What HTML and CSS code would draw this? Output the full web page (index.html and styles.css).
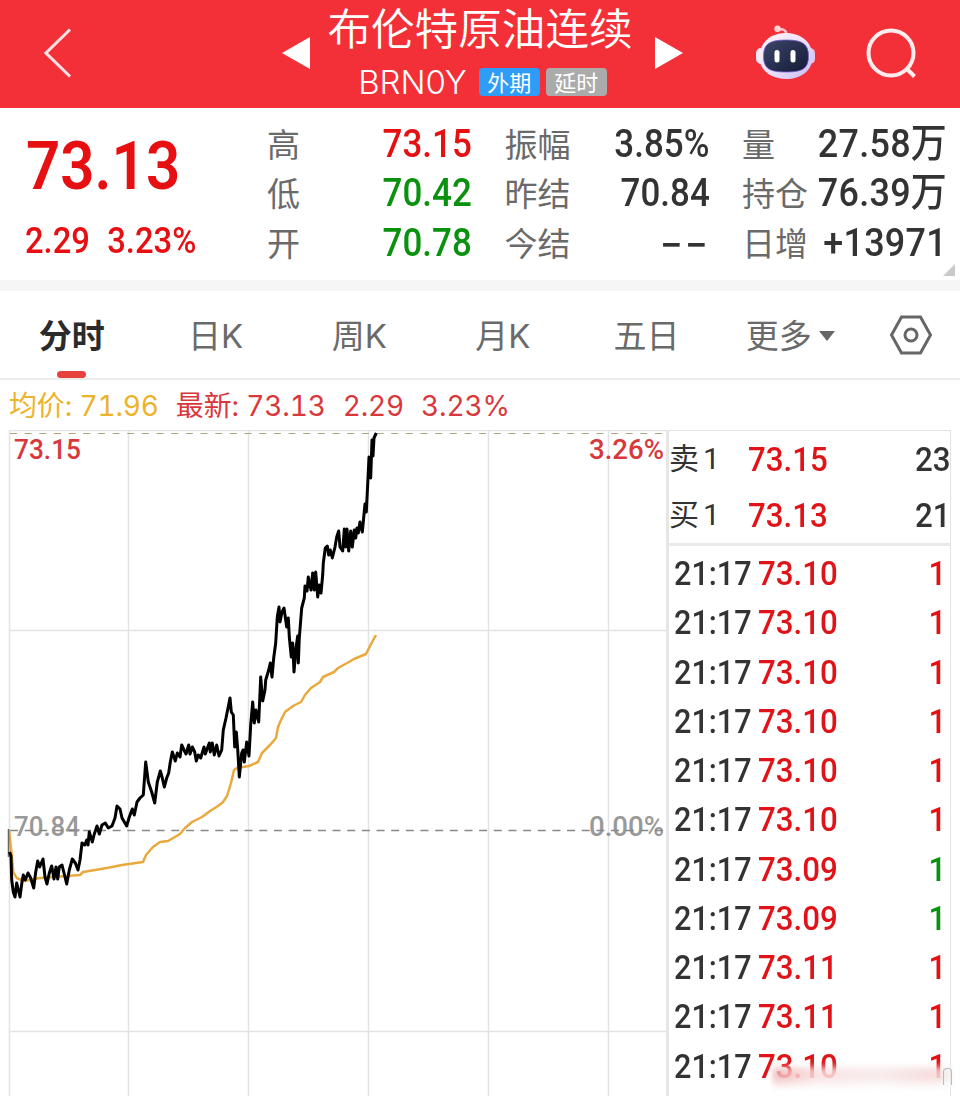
FILE: index.html
```html
<!DOCTYPE html>
<html lang="zh-CN">
<head>
    <meta charset="utf-8" />
    <title>布伦特原油连续</title>
    <link rel="stylesheet" href="styles.css">
</head>
<body>
    <header class="header">
        <svg class="back" width="28" height="50" viewBox="0 0 28 50"><path d="M26 1.500L2 25l24 23.500" /></svg>
        <svg class="prev" width="28" height="32" viewBox="0 0 28 32"><path d="M0 16L28 0v32z" /></svg>
        <div class="title">
            <h1>布伦特原油连续</h1>
            <div class="code">
                <span class="symbol">BRN0Y</span>
                <span class="tag blue">外期</span>
                <span class="tag grey">延时</span>
            </div>
        </div>
        <svg class="next" width="28" height="32" viewBox="0 0 28 32"><path d="M28 16L0 0v32z" /></svg>
        <svg class="robot" width="60" height="56" viewBox="0 0 60 56">
            <defs>
                <linearGradient id="shell" x1="0" y1="0" x2="1" y2="1">
                    <stop offset="0" stop-color="#fff4f7" />
                    <stop offset=".55" stop-color="#ecdff8" />
                    <stop offset="1" stop-color="#c3bcf6" />
                </linearGradient>
                <linearGradient id="face" x1="0" y1="0" x2="1" y2="1">
                    <stop offset="0" stop-color="#3c4668" />
                    <stop offset="1" stop-color="#141b38" />
                </linearGradient>
            </defs>
            <path d="M21 4.500c7-1 10 1 9 6" fill="none" stroke="#ffc4cc" stroke-width="2.500" />
            <circle cx="21.500" cy="3.800" r="3.200" fill="#ffd5da" />
            <rect x="0" y="23" width="10" height="16" rx="5" fill="#f9e6f2" />
            <rect x="49" y="23" width="10" height="16" rx="5" fill="#dcc8f2" />
            <path d="M30 8C45 8 56.500 17 56.500 32c0 14-12 22-26.500 22S3.500 46 3.500 32C3.500 17 15 8 30 8z" fill="url(#shell)" />
            <path d="M30 15c15 0 22.500 3 22.500 16S46 47 30 47 7.500 44 7.500 31 15 15 30 15z" fill="url(#face)" stroke="#7a5fd0" stroke-width=".8" />
            <rect x="18.500" y="25" width="5" height="12.500" rx="2.500" fill="#fff" />
            <rect x="34.500" y="25" width="5" height="12.500" rx="2.500" fill="#fff" />
        </svg>
        <svg class="search" width="52" height="52" viewBox="0 0 52 52"><circle cx="25" cy="25" r="22.500" /><path d="M40.500 40.500l8 8" /></svg>
    </header>

    <section class="quote">
        <div class="last">
            <div class="price">73.13</div>
            <div class="change"><span>2.29</span><span>3.23%</span></div>
        </div>
        <dl class="stats">
            <dt>高</dt><dd class="up">73.15</dd>
            <dt>低</dt><dd class="down">70.42</dd>
            <dt>开</dt><dd class="down">70.78</dd>
        </dl>
        <dl class="stats">
            <dt>振幅</dt><dd>3.85%</dd>
            <dt>昨结</dt><dd>70.84</dd>
            <dt>今结</dt><dd class="empty">--</dd>
        </dl>
        <dl class="stats">
            <dt>量</dt><dd class="wide">27.58万</dd>
            <dt>持仓</dt><dd class="wide">76.39万</dd>
            <dt>日增</dt><dd class="wide">+13971</dd>
        </dl>
        <i class="corner"></i>
    </section>

    <nav class="tabs">
        <a class="active">分时</a>
        <a>日K</a>
        <a>周K</a>
        <a>月K</a>
        <a>五日</a>
        <a>更多<i class="caret"></i></a>
        <svg class="settings" width="44" height="40" viewBox="0 0 44 40"><path d="M12.500 2h19L41.500 20l-10 18h-19L2.500 20z" /><circle cx="22" cy="20" r="6" /></svg>
    </nav>

    <div class="legend">
        <span class="avg">均价: 71.96</span>
        <span>最新: 73.13</span>
        <span>2.29</span>
        <span>3.23%</span>
    </div>

    <main class="main">
        <svg class="chart" width="669" height="666" viewBox="0 430 669 666">
            <g class="grid">
                <path d="M9.500 430V1096M128.500 430V1096M248.500 430V1096M368.500 430V1096M488.500 430V1096M608.500 430V1096" />
                <path d="M9 430.500H669M9 630.500H667M9 1031.500H667" />
                <path class="edge" d="M667.500 430V1096" />
            </g>
            <path class="limit" d="M10 433.500H667" />
            <text class="label grey" x="14" y="835.500" textLength="66" lengthAdjust="spacingAndGlyphs">70.84</text>
            <text class="label grey" x="589" y="835.500" textLength="75" lengthAdjust="spacingAndGlyphs">0.00%</text>
            <path class="zero" d="M10 830.500H667" />
            <polyline class="avg-line" points="9,830 11.700,855 13.300,872 16.700,878 24,881 40,878 80,875 83,872 107,868 122,865 143,862 146,855 153,847 160,842 168,841 180,834 185,828 192,822 202,817 210,811 218,806 223,802 227,796 231,783 234,770 237,768 249,766 258,762 262,753 270,745 276,738 278,727 281,720 285,712 293,706 301,702 305,695 311,688 320,682 323,677 334,672 338,668 349,662 354,659 366,654 371,644 376,635" />
            <path class="open-line" d="M8.500 829V857" />
            <polyline class="price-line" points="9.500,852 11,856 11.700,880 13.300,892 15,897 16.700,883 20,897 22,882 23.300,875 25.300,880 28,873 30.700,878 33.700,888 35.700,872 37.700,861 39.700,867 43,859 45,877 47,884 49.300,873 51.700,866 54,879 56,867 57.700,879 59.300,867 62,865 64,873 66.700,884 69.300,870 72.300,859 75.300,863 78,870 80,860 82,843 84.700,845 86.700,840 88,845 89.300,832 92.300,842 94.300,834 97,826 99.300,834 102,825 105.300,823 108.300,828 112,826 115,818 117,806 120,809 122,818 126.700,826 129.300,817 132.300,809 134.300,815 137,802 140,798 143.300,795 145.700,762 148.300,782 151.700,792 154.700,803 157.300,782 160.300,771 162.300,778 164.300,787 166.700,778 168.700,773 170.300,762 172.300,752 175.300,761 177.300,753 180,757 181.700,745 184,750 186,754 188.700,745 190,754 192.300,747 194.700,752 196.300,761 198.300,755 200.700,758 204,747 205.300,754 209.300,743 210.300,752 212.300,743 214.300,755 216.700,745 219,756 221.700,750 223.300,730 226,718 230,698 231.300,712 233.300,715 234.700,747 236.300,732 237.700,749 239.300,777 241.700,753 243,750 244.300,762 246.700,742 249,756 250.700,725 252.700,702 254.300,723 256,710 258.700,722 260.700,677 262.700,701 265,690 265.700,680 268.700,670 270.300,663 272,677 273.700,658 275.700,643 277.300,617 279,607 280,622 282,612 284,608 286.700,627 288.300,618 289.300,637 291.300,657 292.700,643 294,672 296,648 297.700,636 298.300,663 299.300,638 301.700,608 304.300,598 305,586 307,591 308.300,577 311,590 312.700,573 314.300,590 315.700,572 317.700,597 319.300,585 321,593 322.700,575 323.300,563 325.300,548 327.300,546 328.700,555 330.300,550 332.300,558 335,547 336.700,537 338.700,531 340,547 342.700,551 344.300,529 345.700,547 347,529 348.700,551 350.700,531 352.300,547 354.300,530 355.700,538 357,528 358.300,533 360,522 362.300,532 365,504 366.300,512 368,478 369,457 370.700,478 372,440 373,456 374,438 376.300,433" />
            <text class="label red" x="14" y="458.500" textLength="67" lengthAdjust="spacingAndGlyphs">73.15</text>
            <text class="label red" x="589" y="458.500" textLength="75" lengthAdjust="spacingAndGlyphs">3.26%</text>
        </svg>

        <aside class="book">
            <div class="orders">
                <div class="row"><span>卖1</span><b>73.15</b><em>23</em></div>
                <div class="row"><span>买1</span><b>73.13</b><em>21</em></div>
            </div>
            <div class="trades">
                <div class="row"><span>21:17</span><b>73.10</b><em class="up">1</em></div>
                <div class="row"><span>21:17</span><b>73.10</b><em class="up">1</em></div>
                <div class="row"><span>21:17</span><b>73.10</b><em class="up">1</em></div>
                <div class="row"><span>21:17</span><b>73.10</b><em class="up">1</em></div>
                <div class="row"><span>21:17</span><b>73.10</b><em class="up">1</em></div>
                <div class="row"><span>21:17</span><b>73.10</b><em class="up">1</em></div>
                <div class="row"><span>21:17</span><b>73.09</b><em class="down">1</em></div>
                <div class="row"><span>21:17</span><b>73.09</b><em class="down">1</em></div>
                <div class="row"><span>21:17</span><b>73.11</b><em class="up">1</em></div>
                <div class="row"><span>21:17</span><b>73.11</b><em class="up">1</em></div>
                <div class="row"><span>21:17</span><b>73.10</b><em class="up">1</em></div>
            </div>
            <i class="smudge"></i>
            <i class="smudge-end"></i>
        </aside>
    </main>
</body>
</html>
```
FILE: styles.css
```css
* {
    box-sizing: border-box;
}

body {
    margin: 0;
    width: 960px;
    height: 1096px;
    overflow: hidden;
    background: #fff;
    color: #333;
    font-family: Roboto, "Noto Sans CJK SC", sans-serif;
}

h1, dl, dt, dd {
    margin: 0;
    font-weight: normal;
}

em, i {
    font-style: normal;
}

.up {
    color: #e60f12;
}

.down {
    color: #0a910f;
}

/* header */
.header {
    display: flex;
    align-items: flex-start;
    height: 108px;
    background: #f33038;
    color: #fff;
}

    .header svg {
        flex: none;
    }

.back {
    margin: 28px 0 0 44px;
    fill: none;
    stroke: #ffe1e3;
    stroke-width: 3;
}

.prev, .next {
    margin-top: 37px;
    fill: #fff;
}

.prev {
    margin-left: 210px;
}

.title {
    width: 345px;
    text-align: center;
}

    .title h1 {
        height: 60px;
        margin-left: -5px;
        font: 350 43.6px/52px "Noto Sans CJK SC", sans-serif;
        white-space: nowrap;
    }

.code {
    display: flex;
    align-items: center;
    justify-content: center;
    gap: 6px;
    height: 44px;
}

.symbol {
    margin-right: 6px;
    font: 350 33px/44px Inter, sans-serif;
}

.tag {
    width: 61px;
    height: 28px;
    border-radius: 4px;
    font: 400 22px/27px "Noto Sans CJK SC", sans-serif;
}

.blue {
    background: #2f9cf8;
}

.grey {
    background: #ababab;
}

.robot {
    margin: 25px 0 0 73px;
}

.search {
    margin: 28px 0 0 50px;
    fill: none;
    stroke: #ffecee;
    stroke-width: 4;
}

/* quote */
.quote {
    position: relative;
    display: flex;
    height: 183px;
    padding-top: 11px;
    border-bottom: 11px solid #f6f6f6;
}

.last {
    flex: none;
    width: 267px;
    padding: 1px 0 0 25px;
    color: #e60f12;
}

.price {
    height: 93px;
    padding-left: 1px;
    font-size: 67.500px;
    font-weight: 600;
    line-height: 92px;
    transform: scaleX(.89);
    transform-origin: left;
}

.change {
    display: flex;
    gap: 19px;
    font-size: 36px;
    font-weight: 500;
    line-height: 56px;
    transform: scaleX(.91);
    transform-origin: left;
}

.stats {
    display: grid;
    flex: none;
    grid-template-columns: auto 1fr;
    grid-auto-rows: 49.300px;
    align-content: start;
    width: 205px;
    margin-right: 32.500px;
}

    .stats dt {
        width: 66px;
        margin-right: -12px;
        color: #6a6a6a;
        font: 400 33px/49px "Noto Sans CJK SC", sans-serif;
        white-space: nowrap;
    }

    .stats dd {
        justify-self: end;
        font-size: 39.500px;
        font-weight: 500;
        line-height: 50px;
        white-space: nowrap;
        transform: scaleX(.885);
        transform-origin: right;
    }

    .stats .empty {
        font-family: Inter, sans-serif;
        letter-spacing: 1px;
        transform: scaleX(1.300);
    }

    .stats .wide {
        letter-spacing: .3px;
        transform: scaleX(.91);
    }

.corner {
    position: absolute;
    right: 5px;
    bottom: 4px;
    border-left: 12px solid transparent;
    border-bottom: 12px solid #c9c9c9;
}

/* tabs */
.tabs {
    display: grid;
    grid-template-columns: repeat(6, 143.700px) 1fr;
    align-items: center;
    height: 89px;
    border-bottom: 2px solid #ececec;
}

    .tabs a {
        position: relative;
        height: 87px;
        color: #6a6a6a;
        text-align: center;
        font: 400 33px/90px Inter, "Noto Sans CJK SC", sans-serif;
    }

    .tabs .active {
        color: #2b2b2b;
        font-weight: 700;
    }

        .tabs .active::after {
            content: "";
            position: absolute;
            left: 57px;
            bottom: 0;
            width: 29px;
            height: 7px;
            border-radius: 4px;
            background: #e5423c;
        }

.caret {
    display: inline-block;
    margin-left: 7px;
    vertical-align: 7px;
    border: 8px solid transparent;
    border-top: 10px solid #666;
    border-bottom: 0;
}

.settings {
    margin-left: 27px;
    fill: none;
    stroke: #666;
    stroke-width: 3;
}

/* chart legend */
.legend {
    display: flex;
    gap: 17px;
    height: 50px;
    padding-left: 9px;
    color: #d8383c;
    font: 400 28px/52px Inter, "Noto Sans CJK SC", sans-serif;
    font-variant-numeric: tabular-nums;
    letter-spacing: -.150px;
}

    .legend .avg {
        color: #ecb32c;
    }

/* chart */
.main {
    display: flex;
    height: 666px;
}

.chart {
    flex: none;
}

    .chart path, .chart polyline {
        fill: none;
    }

.grid {
    stroke: #e3e3e3;
    stroke-width: 1.500;
}

    .grid .edge {
        stroke: #e6e6e6;
        stroke-width: 3;
    }

.limit {
    stroke: #aaa67e;
    stroke-dasharray: 7 7.660;
}

.zero {
    stroke: #888;
    stroke-width: 1.300;
    stroke-dasharray: 8 6.660;
}

.avg-line {
    stroke: #e9a93c;
    stroke-width: 2.500;
    stroke-linejoin: round;
}

.open-line {
    stroke: #666;
    stroke-width: 1.500;
}

.price-line {
    stroke: #000;
    stroke-width: 3;
    stroke-linejoin: round;
}

.label {
    font-size: 28.500px;
    font-weight: 500;
}

    .label.red {
        fill: #d8383c;
    }

    .label.grey {
        fill: #999;
    }

/* order book */
.book {
    position: relative;
    width: 282px;
    border-top: 1px solid #e3e3e3;
    border-right: 1px solid #e3e3e3;
}

.row {
    display: grid;
    grid-template-columns: 79px 1fr auto;
    font-size: 34px;
}

    .row b, .row em, .trades span {
        justify-self: start;
        font-weight: 500;
        transform: scaleX(.92);
        transform-origin: left;
    }

    .row b {
        color: #e01418;
    }

    .row em {
        transform-origin: right;
    }

.orders {
    height: 115px;
    border-bottom: 3px solid #e9e9e9;
}

    .orders .row {
        line-height: 56px;
    }

    .orders em {
        margin-right: -1px;
    }

    .orders span {
        font-size: 30px;
        letter-spacing: 4px;
    }

.trades {
    padding: 3px 4px 0 5px;
}

    .trades .row {
        grid-template-columns: 84px 1fr auto;
        line-height: 49.250px;
    }

    .trades span {
        transform: scaleX(.9);
    }

/* faded patch over the bottom right corner */
.smudge {
    position: absolute;
    left: 104px;
    top: 636px;
    width: 178px;
    height: 22px;
    background: linear-gradient(rgba(255, 255, 255, .3), transparent 40%, #fff), linear-gradient(90deg, #eda9a9, #f8dcdc 25%, #f6e6e6 60%, #f5d2d2 90%, #eee);
    filter: blur(3px);
    opacity: .85;
}

.smudge-end {
    position: absolute;
    right: -2px;
    top: 637px;
    width: 9px;
    height: 17px;
    border: 1.500px solid #bbb;
    border-bottom: 0;
    border-radius: 4px 4px 0 0;
    filter: blur(.5px);
}
```
